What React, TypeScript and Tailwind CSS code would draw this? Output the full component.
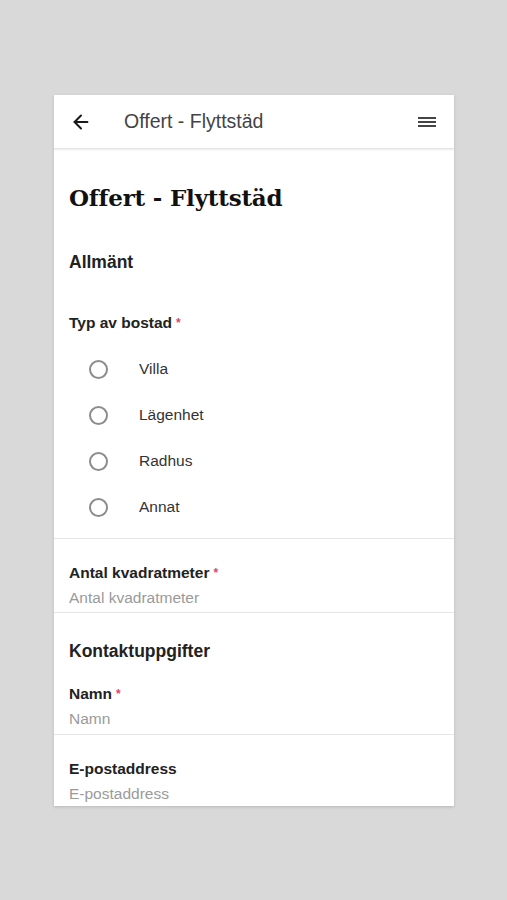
import { ArrowLeft } from "lucide-react";

const TYPES = ["Villa", "Lägenhet", "Radhus", "Annat"];

const sans = { fontFamily: "Arial, 'Liberation Sans', sans-serif" };

function Req() {
  return <span className="text-[#e2456a] text-[12px] align-top ml-[4px]">*</span>;
}

function Field({ label, required }: { label: string; required?: boolean }) {
  return (
    <div className="border-t border-[#e6e6e6] px-[15px] pt-[25px] pb-[2px]">
      <div className="text-[15.5px] font-bold text-[#222] leading-[18px]">
        {label}
        {required && <Req />}
      </div>
      <input
        placeholder={label}
        className="w-full text-[15.5px] text-[#333] placeholder:text-[#9a9a9a] leading-[20px] mt-[6px] outline-none bg-transparent"
        style={sans}
      />
    </div>
  );
}

export default function App() {
  return (
    <div
      className="min-h-[900px] bg-[#d9d9d9] pt-[95px] pl-[54px]"
      style={{ fontFamily: "'Liberation Sans', Arial, sans-serif" }}
    >
      <div className="w-[400px] h-[711px] bg-white overflow-hidden shadow-[0_1px_3px_rgba(0,0,0,0.15)]">
        <header className="h-[54px] flex items-center pl-[16px] pr-[18px] border-b border-[#e3e3e3] shadow-[0_1px_2px_rgba(0,0,0,0.08)]">
          <ArrowLeft className="w-[22px] h-[22px] text-[#1a1a1a]" strokeWidth={2.2} />
          <span className="ml-[32px] text-[19.5px] text-[#444] flex-1">Offert - Flyttstäd</span>
          <svg width="18" height="10" viewBox="0 0 18 10" className="text-[#444]">
            <path d="M0 1h18M0 5h18M0 9h18" stroke="currentColor" strokeWidth="1.8" />
          </svg>
        </header>

        <div className="px-[15px] pt-[35px]">
          <h1
            className="text-[23px] font-bold text-[#111] leading-[28px]"
            style={{ fontFamily: "'DejaVu Serif', Georgia, serif", letterSpacing: "-0.2px" }}
          >
            Offert - Flyttstäd
          </h1>
          <h2 className="text-[17.5px] font-bold text-[#222] mt-[40px] leading-[20px]">Allmänt</h2>
          <div className="text-[15.5px] font-bold text-[#222] mt-[42px] leading-[18px]">
            Typ av bostad
            <Req />
          </div>
          <div className="mt-[14px] pb-[8px]">
            {TYPES.map((t) => (
              <label key={t} className="flex items-center h-[46px] cursor-pointer">
                <span className="ml-[20px] w-[19px] h-[19px] rounded-full border-2 border-[#8c8c8c]" />
                <span className="ml-[31px] text-[15.5px] text-[#333]">{t}</span>
              </label>
            ))}
          </div>
        </div>

        <Field label="Antal kvadratmeter" required />

        <div className="border-t border-[#e6e6e6] px-[15px] pt-[28px]">
          <h2 className="text-[17.5px] font-bold text-[#222] leading-[20px]">Kontaktuppgifter</h2>
          <div className="text-[15.5px] font-bold text-[#222] leading-[18px] mt-[24px]">
            Namn
            <Req />
          </div>
          <input
            placeholder="Namn"
            className="w-full text-[15.5px] placeholder:text-[#9a9a9a] leading-[20px] mt-[6px] pb-[5px] outline-none"
            style={sans}
          />
        </div>

        <Field label="E-postaddress" />
      </div>
    </div>
  );
}
